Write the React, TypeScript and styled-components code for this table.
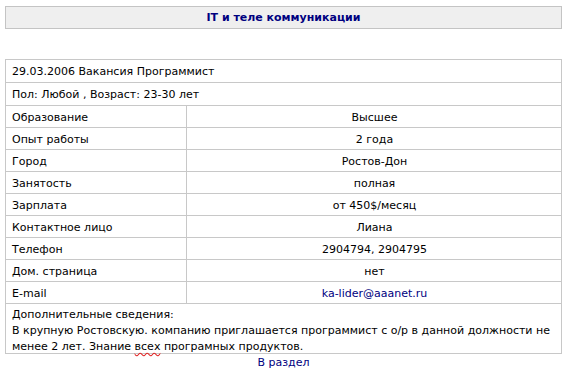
import styled, { createGlobalStyle } from "styled-components";

const GlobalStyle = createGlobalStyle`
  body {
    margin: 0;
    background: #ffffff;
    font-family: "DejaVu Sans", Verdana, sans-serif;
    font-size: 11px;
    color: #000000;
  }
`;

type Row = { label: string; value: string; link?: boolean };

const rows: Row[] = [
  { label: "Образование", value: "Высшее" },
  { label: "Опыт работы", value: "2 года" },
  { label: "Город", value: "Ростов-Дон" },
  { label: "Занятость", value: "полная" },
  { label: "Зарплата", value: "от 450$/месяц" },
  { label: "Контактное лицо", value: "Лиана" },
  { label: "Телефон", value: "2904794, 2904795" },
  { label: "Дом. страница", value: "нет" },
  { label: "E-mail", value: "ka-lider@aaanet.ru", link: true },
];

const App = () => {
  return (
    <>
      <GlobalStyle />
      <Page>
        <TitleBar>IT и теле коммуникации</TitleBar>

        <VacancyGrid>
          <WideCell $tall>29.03.2006 Вакансия Программист</WideCell>
          <WideCell $tall>Пол: Любой , Возраст: 23-30 лет</WideCell>
          {rows.map((r) => (
            <Line key={r.label}>
              <LabelCell>{r.label}</LabelCell>
              <ValueCell>
                {r.link ? <MailLink href="#">{r.value}</MailLink> : r.value}
              </ValueCell>
            </Line>
          ))}
          <NotesCell>
            <NoteLine>Дополнительные сведения:</NoteLine>
            <NoteLine>
              В крупную Ростовскую. компанию приглашается программист с о/р в данной должности не
            </NoteLine>
            <NoteLine>
              <span>менее 2 лет. Знание </span>
              <Misspelled>всех</Misspelled>
              <span> програмных продуктов.</span>
            </NoteLine>
          </NotesCell>
        </VacancyGrid>

        <BackLine>
          <BackLink href="#">В раздел</BackLink>
        </BackLine>
      </Page>
    </>
  );
};

export default App;

const Page = styled.div`
  display: flex;
  flex-direction: column;
  padding: 6px 6px 0 5px;
`;

const TitleBar = styled.div`
  height: 21px;
  display: flex;
  align-items: center;
  justify-content: center;
  background: #efefef;
  border: 1px solid #c4c4c4;
  color: #000080;
  font-weight: bold;
  font-size: 11px;
  margin-bottom: 30px;
`;

const VacancyGrid = styled.div`
  display: grid;
  grid-template-columns: 181px 1fr;
  border-top: 1px solid #c8c8c8;
  border-left: 1px solid #c8c8c8;
`;

const Line = styled.div`
  display: contents;
`;

const Cell = styled.div`
  display: flex;
  align-items: center;
  padding: 1px 5px 0 6px;
  box-sizing: border-box;
  height: 22px;
  border-right: 1px solid #c8c8c8;
  border-bottom: 1px solid #c8c8c8;
  white-space: nowrap;
`;

const WideCell = styled(Cell)<{ $tall?: boolean }>`
  grid-column: 1 / -1;
  height: ${(p) => (p.$tall ? "23px" : "22px")};
`;

const LabelCell = styled(Cell)``;

const ValueCell = styled(Cell)`
  justify-content: center;
`;

const NotesCell = styled.div`
  grid-column: 1 / -1;
  padding: 3px 6px 1px 6px;
  height: 50px;
  box-sizing: border-box;
  border-right: 1px solid #c8c8c8;
  border-bottom: 1px solid #c8c8c8;
`;

const NoteLine = styled.div`
  line-height: 16px;
  white-space: nowrap;
`;

const Misspelled = styled.span`
  text-decoration: underline wavy #e02020;
  text-underline-offset: 2px;
`;

const MailLink = styled.a`
  color: #000080;
  text-decoration: none;
`;

const BackLine = styled.div`
  display: flex;
  justify-content: center;
  line-height: 16px;
  padding-top: 1px;
`;

const BackLink = styled.a`
  color: #000080;
  text-decoration: none;
`;
